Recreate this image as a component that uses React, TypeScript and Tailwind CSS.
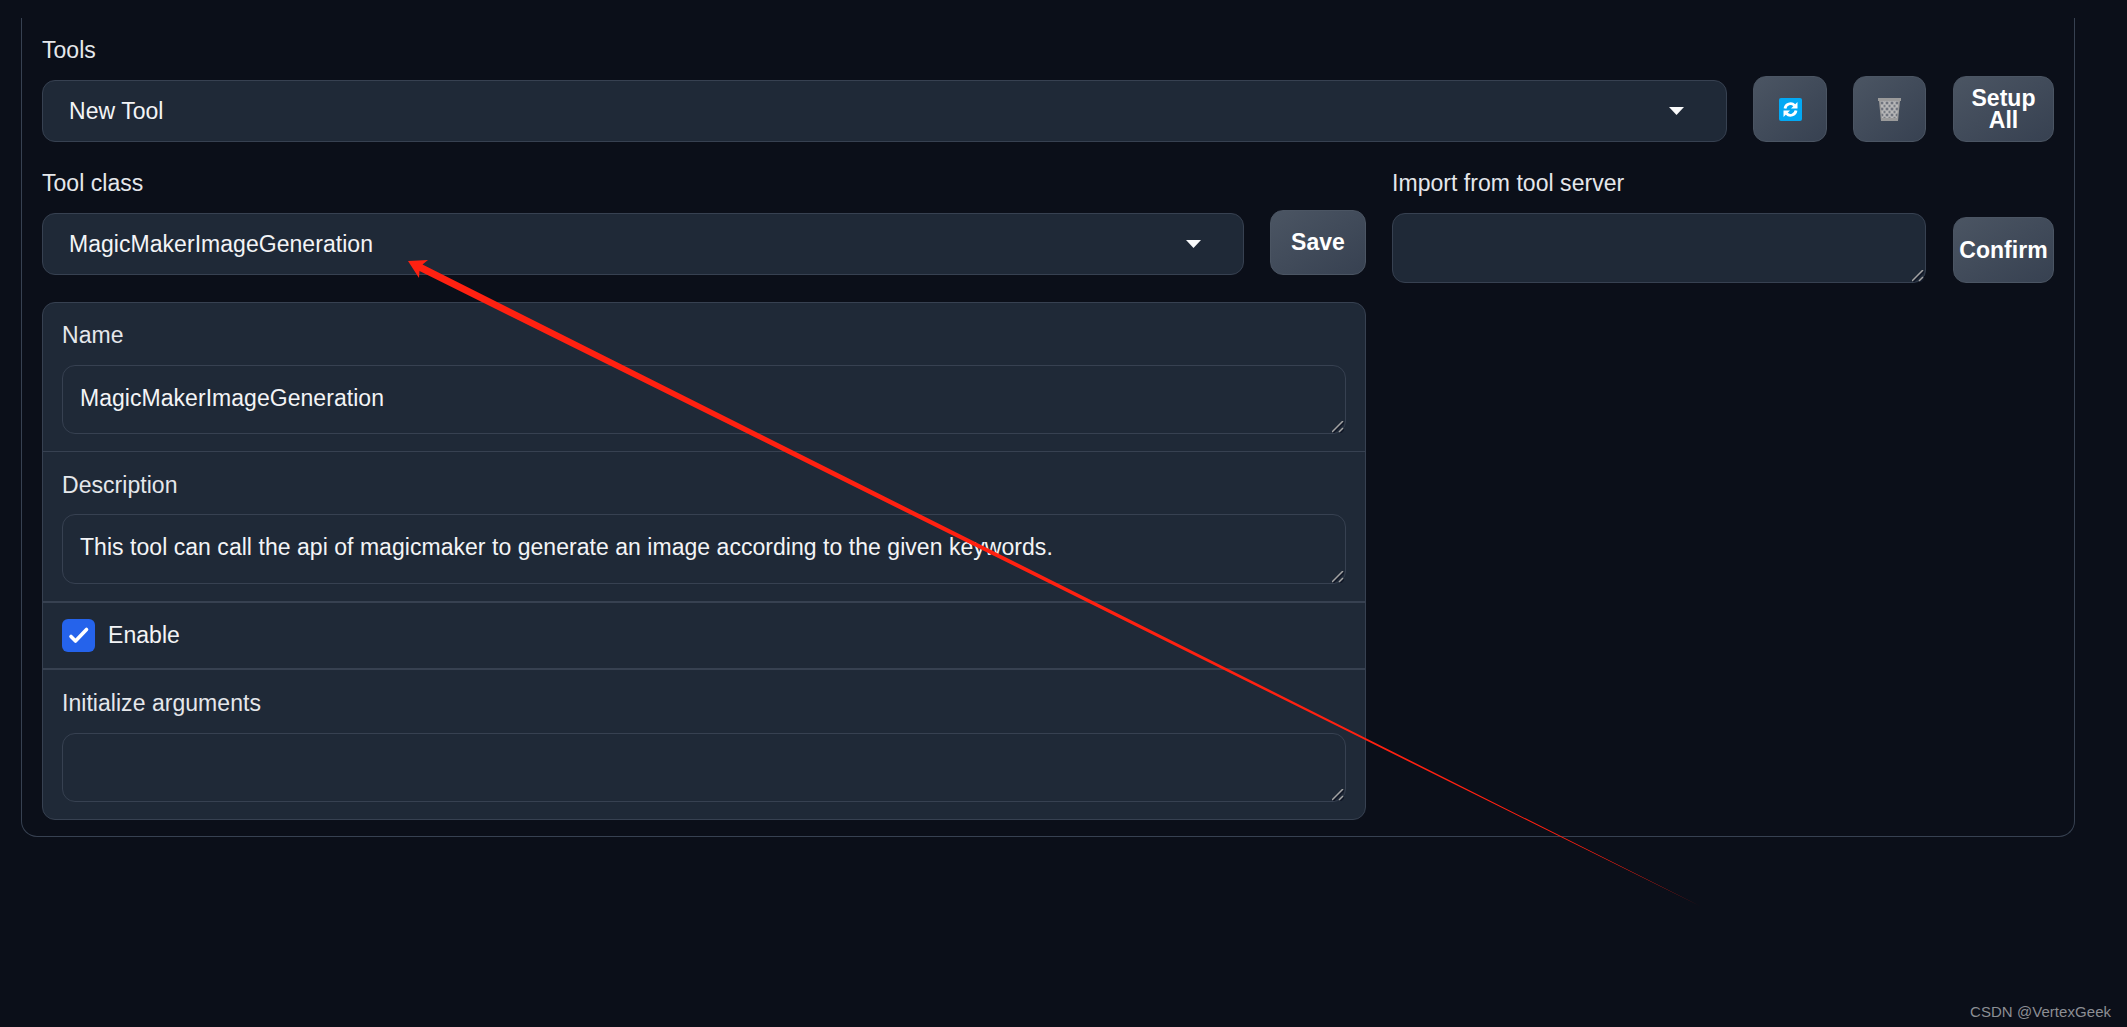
import React from "react";

const FONT = "font-['Liberation_Sans',Arial,sans-serif]";

function Caret() {
  return (
    <svg width="15" height="8" viewBox="0 0 15 8" className="shrink-0">
      <path d="M0 0h15L7.500 8z" fill="#f9fafb" />
    </svg>
  );
}

function Dropdown({ value }: { value: string }) {
  return (
    <button
      type="button"
      className="flex h-[62px] min-w-0 flex-1 items-center justify-between rounded-[13px] border border-[#374151] bg-[#1f2937] pl-[26px] pr-[42px] text-left text-[23px] text-[#f3f4f6]"
    >
      <span>{value}</span>
      <Caret />
    </button>
  );
}

function GrayButton({ className, children }: { className: string; children: React.ReactNode }) {
  return (
    <button
      type="button"
      className={`flex shrink-0 items-center justify-center rounded-[13px] border border-[#4b5563] bg-gradient-to-br from-[#4b5563] to-[#374151] text-center text-[23px] leading-[22px] font-bold text-white ${className}`}
    >
      {children}
    </button>
  );
}

function Area({ value, className }: { value?: string; className: string }) {
  return (
    <div className={`relative ${className}`}>
      <textarea
        defaultValue={value}
        className="block h-full w-full resize-none rounded-[13px] border border-[#374151] bg-[#1f2937] px-[17px] py-[16px] text-[23px] leading-[33px] text-[#f3f4f6] outline-none"
      />
      {/* resize grip */}
      <svg className="absolute right-[2px] bottom-[1px]" width="12" height="12" viewBox="0 0 12 12">
        <path d="M1 12 12 1M8 12l4-4" stroke="#111827" strokeWidth="2.200" />
        <path d="M0 11 11 0M7 11l4-4" stroke="#a3a3a3" strokeWidth="1.500" />
      </svg>
    </div>
  );
}

function RefreshIcon() {
  return (
    <svg width="23" height="23" viewBox="0 0 23 23">
      <rect width="23" height="23" rx="2" fill="#03a9f4" />
      <path d="M6 10.500a5.500 5.500 0 0 1 9.500-3" fill="none" stroke="#fff" strokeWidth="2.800" />
      <path d="M18.500 4v6.500H12z" fill="#fff" />
      <path d="M17 12.500a5.500 5.500 0 0 1-9.500 3" fill="none" stroke="#fff" strokeWidth="2.800" />
      <path d="M4.500 19v-6.500H11z" fill="#fff" />
    </svg>
  );
}

function TrashIcon() {
  return (
    <svg width="23" height="23" viewBox="0 0 23 23">
      <defs>
        <pattern id="mesh" x="1.500" y="3.500" width="5" height="6" patternUnits="userSpaceOnUse">
          <rect width="5" height="6" fill="#b9b9b9" />
          <path d="M2.500 0 4 1.500 2.500 3 1 1.500z" fill="#4a5160" />
          <path d="M0 3 1 4.500 0 6zM5 3 4 4.500 5 6z" fill="#4a5160" />
        </pattern>
      </defs>
      <path d="M0 0h23v3H22L20 23H3L1 3H0z" fill="#9b9b9b" />
      <path d="M2.500 3h18l-1.500 17H4z" fill="url(#mesh)" />
    </svg>
  );
}

export default function App() {
  return (
    <div className={`relative h-[1027px] w-[2127px] overflow-hidden bg-[#0b0f19] pt-[18px] pl-[21px] tracking-[0.04px] ${FONT}`}>
      <div className="w-[2054px] rounded-b-[16px] border-x border-b border-[#374151] px-[20px] pt-[18px] pb-[16px]">
        {/* Tools */}
        <label className="mb-[12px] block text-[23px] leading-[28px] text-[#e5e7eb]">Tools</label>
        <div className="flex items-end gap-[26px]">
          <Dropdown value="New Tool" />
          <GrayButton className="h-[66px] w-[74px]">
            <RefreshIcon />
          </GrayButton>
          <GrayButton className="h-[66px] w-[73px]">
            <TrashIcon />
          </GrayButton>
          <GrayButton className="ml-px h-[66px] w-[101px]">
            Setup
            <br />
            All
          </GrayButton>
        </div>

        <div className="mt-[27px] flex items-start gap-[26px]">
          {/* Tool class + form */}
          <div className="w-[1324px] shrink-0">
            <label className="mb-[13px] block text-[23px] leading-[28px] text-[#e5e7eb]">Tool class</label>
            <div className="flex items-end gap-[26px]">
              <Dropdown value="MagicMakerImageGeneration" />
              <GrayButton className="h-[65px] w-[96px] pb-[2px]">Save</GrayButton>
            </div>

            <div className="mt-[27px] overflow-hidden rounded-[13px] border border-[#374151] bg-[#1f2937]">
              <div className="border-b border-[#374151] px-[19px] pt-[18px] pb-[17px]">
                <label className="mb-[16px] block text-[23px] leading-[28px] text-[#e5e7eb]">Name</label>
                <Area value="MagicMakerImageGeneration" className="h-[69px]" />
              </div>
              <div className="border-b-2 border-[#374151] px-[19px] pt-[19px] pb-[17px]">
                <label className="mb-[15px] block text-[23px] leading-[28px] text-[#e5e7eb]">Description</label>
                <Area
                  value="This tool can call the api of magicmaker to generate an image according to the given keywords."
                  className="h-[70px]"
                />
              </div>
              <div className="flex h-[67px] items-center gap-[13px] border-b-2 border-[#374151] px-[19px]">
                <span className="h-[33px] w-[33px] rounded-[6px] bg-[#2563eb]">
                  <svg width="33" height="33" viewBox="0 0 33 33">
                    <path d="M9 17.500l4.500 4.500L24.500 10.500" fill="none" stroke="#fff" strokeWidth="3.600" strokeLinecap="round" strokeLinejoin="round" />
                  </svg>
                </span>
                <span className="text-[23px] text-[#f3f4f6]">Enable</span>
              </div>
              <div className="px-[19px] pt-[19px] pb-[17px]">
                <label className="mb-[16px] block text-[23px] leading-[28px] text-[#e5e7eb]">Initialize arguments</label>
                <Area className="h-[69px]" />
              </div>
            </div>
          </div>

          {/* Import */}
          <div className="w-[662px] shrink-0">
            <label className="mb-[16px] block text-[23px] leading-[28px] text-[#e5e7eb]">Import from tool server</label>
            <div className="flex items-end gap-[27px]">
              <Area className="h-[70px] min-w-0 flex-1" />
              <GrayButton className="h-[66px] w-[101px]">Confirm</GrayButton>
            </div>
          </div>
        </div>
      </div>

      {/* red annotation arrow */}
      <svg className="pointer-events-none absolute top-0 left-0" width="2127" height="1027" viewBox="0 0 2127 1027">
        <path d="M408 261 428 260 422.500 264.500 1700 906 419.500 271 419 278z" fill="#ff2111" />
      </svg>

      <span className="absolute top-[1003px] left-[1970px] text-[15px] leading-[17px] tracking-[0.05px] text-[#8b8e94]">CSDN @VertexGeek</span>
    </div>
  );
}
